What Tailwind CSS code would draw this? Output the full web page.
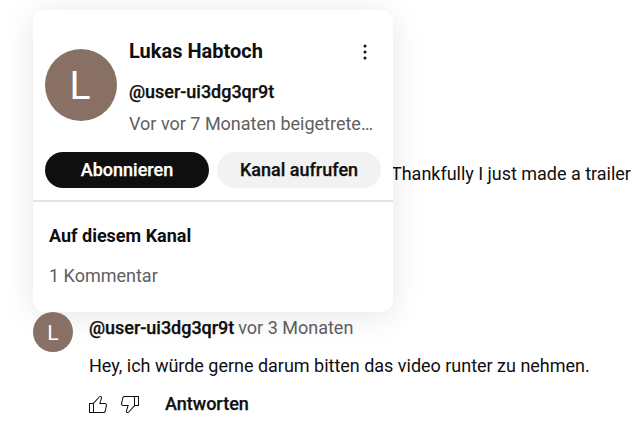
<!DOCTYPE html>
<html lang="de">
<head>
<meta charset="utf-8">
<title>Kommentare</title>
<script src="https://cdn.jsdelivr.net/npm/@tailwindcss/browser@4"></script>
</head>
<body class="bg-white">
<div class="relative w-[632px] h-[448px] overflow-hidden font-['Roboto',sans-serif] text-lg leading-6 text-[#0f0f0f] whitespace-nowrap">
  <main class="flex flex-col pl-[33px]">
    <p class="h-[312px] pt-[162px] pl-[358px] tracking-[-0.02px]">Thankfully I just made a trailer</p>
    <article class="flex gap-4">
      <div class="relative z-20 flex size-10 shrink-0 items-center justify-center rounded-full bg-[#897064] pt-px text-[21px] text-white">L</div>
      <div class="flex flex-col">
        <div class="mt-1 flex gap-1"><span class="font-medium tracking-[-0.03px] [-webkit-text-stroke:0.25px_#0f0f0f]">@user-ui3dg3qr9t</span><span class="text-[#606060]">vor 3 Monaten</span></div>
        <p class="mt-[14px] tracking-[-0.015px]">Hey, ich würde gerne darum bitten das video runter zu nehmen.</p>
        <div class="mt-[14px] -ml-[3px] flex items-center gap-2">
          <svg class="size-6" viewBox="0 0 24 24" fill="currentColor"><path d="M18.77,11h-4.23l1.52-4.94C16.38,5.03,15.54,4,14.38,4c-0.58,0-1.14,0.24-1.52,0.65L7,11H3v10h4h1h9.43c1.06,0,1.98-0.67,2.19-1.61l1.34-6C21.23,12.15,20.18,11,18.77,11z M7,20H4v-8h3V20z M19.98,13.17l-1.34,6C18.54,19.65,18.03,20,17.43,20H8v-8.61l5.6-6.06C13.79,5.12,14.08,5,14.38,5c0.26,0,0.5,0.11,0.63,0.3c0.07,0.1,0.15,0.26,0.09,0.47l-1.52,4.94L13.18,12h1.35h4.23c0.41,0,0.8,0.17,1.03,0.46C19.92,12.61,20.05,12.86,19.98,13.17z"/></svg>
          <svg class="size-6" viewBox="0 0 24 24" fill="currentColor"><path d="M17,4h-1H6.57C5.5,4,4.59,4.67,4.38,5.61l-1.34,6C2.77,12.85,3.82,14,5.23,14h4.23l-1.52,4.94C7.62,19.97,8.46,21,9.62,21c0.58,0,1.14-0.24,1.52-0.65L17,14h4V4H17z M10.4,19.67C10.21,19.88,9.92,20,9.62,20c-0.26,0-0.5-0.11-0.63-0.3c-0.07-0.1-0.15-0.26-0.09-0.47l1.52-4.94l0.4-1.29H9.46H5.23c-0.41,0-0.8-0.17-1.03-0.46c-0.12-0.15-0.25-0.4-0.18-0.72l1.34-6C5.46,5.35,5.97,5,6.57,5H16v8.61L10.4,19.67z M20,13h-3V5h3V13z"/></svg>
          <button class="ml-[15px] font-medium [-webkit-text-stroke:0.25px_#0f0f0f]">Antworten</button>
        </div>
      </div>
    </article>
  </main>

  <section class="absolute left-[33px] top-[10px] z-10 h-[302px] w-[360px] rounded-xl bg-white shadow-[0_4px_32px_rgba(0,0,0,0.1)]">
    <div class="flex h-[142px] pl-3">
      <div class="mt-[39px] flex size-[72px] shrink-0 items-center justify-center rounded-full bg-[#897064] pt-0.5 pr-0.5 text-[39px] text-white">L</div>
      <div class="ml-3 flex w-[246px] flex-col">
        <div class="mt-[27px] flex h-7 items-center justify-between">
          <h1 class="text-xl font-bold">Lukas Habtoch</h1>
          <svg class="mr-[-2px] mt-0.5 size-6" viewBox="0 0 24 24" fill="currentColor"><circle cx="12" cy="6" r="1.5"/><circle cx="12" cy="12" r="1.5"/><circle cx="12" cy="18" r="1.5"/></svg>
        </div>
        <p class="mt-[15px] font-medium tracking-[-0.03px] [-webkit-text-stroke:0.25px_#0f0f0f]">@user-ui3dg3qr9t</p>
        <p class="mt-2 truncate text-[#606060]">Vor vor 7 Monaten beigetrete…</p>
      </div>
    </div>
    <div class="flex gap-2 px-3 font-medium">
      <button class="h-9 flex-1 rounded-full bg-[#0f0f0f] text-white [-webkit-text-stroke:0.25px_#fff]">Abonnieren</button>
      <button class="h-9 flex-1 rounded-full bg-[#f2f2f2] [-webkit-text-stroke:0.25px_#0f0f0f]">Kanal aufrufen</button>
    </div>
    <div class="mt-3 border-t-2 border-[#e5e5e5] px-4 pt-[22px]">
      <h2 class="font-bold">Auf diesem Kanal</h2>
      <p class="mt-4 text-[#606060]">1 Kommentar</p>
    </div>
  </section>
</div>
</body>
</html>
